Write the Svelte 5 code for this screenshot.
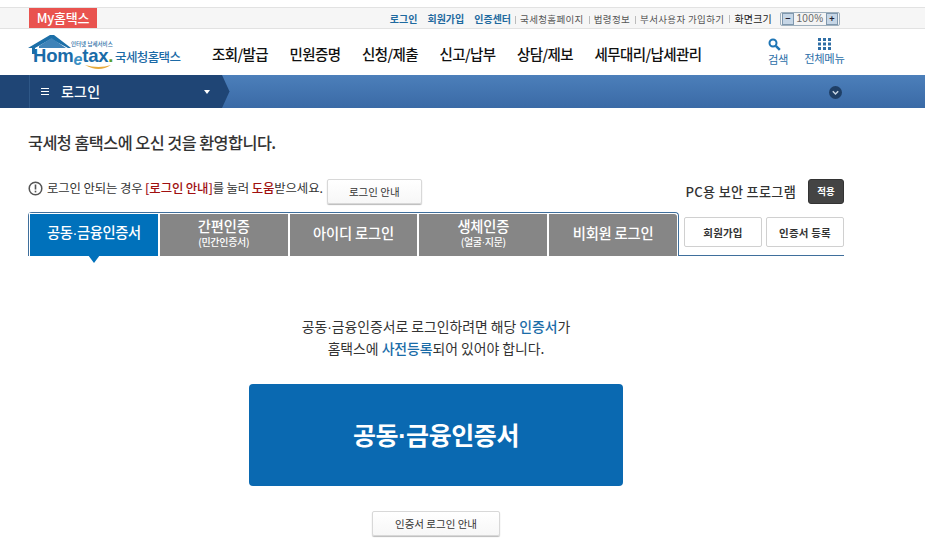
<script>
  const tabs = [
    { a: '공동', b: '금융인증서', active: true },
    { t: '간편인증', s: '(민간인증서)' },
    { t: '아이디 로그인' },
    { t: '생체인증', sa: '(얼굴', sb: '지문)' },
    { t: '비회원 로그인' }
  ];
  const menu = ['조회/발급', '민원증명', '신청/제출', '신고/납부', '상담/제보', '세무대리/납세관리'];
</script>

<div class="page">
  <div class="util">
    <div class="my">My홈택스</div>
    <div class="links">
      <b>로그인</b><b>회원가입</b><b>인증센터</b>
      <span class="sep first">국세청홈페이지</span>
      <span class="sep">법령정보</span>
      <span class="sep">부서사용자 가입하기</span>
      <span class="sep dark">화면크기</span>
      <div class="zoomer"><i>−</i><em>100%</em><i>+</i></div>
    </div>
  </div>

  <header class="head">
    <div class="logo">
      <svg width="90" height="44" viewBox="0 0 90 44" class="house">
        <path d="M1 15 L23 2 L27 2 L44 15 L41 15 L24 6 L8 15 L8 21 L5 21 L5 15 Z" fill="#1c6fa8"/>
        <path d="M12 13 L24.500 5 L39 15 L12 15 Z" fill="#3f83b8"/>
        <path d="M58 32 Q72 40 84 32 Q72 36 58 32 Z" fill="#e6a93c"/>
      </svg>
      <span class="mini">인터넷 납세서비스</span>
      <span class="home">Hom<span class="e">e</span>tax<span class="dot">.</span></span>
      <span class="kr">국세청홈택스</span>
    </div>
    <nav class="nav">
      {#each menu as m}<span>{m}</span>{/each}
    </nav>
    <div class="tools">
      <div class="tool s">
        <svg class="lens" width="13" height="13" viewBox="0 0 13 13"><circle cx="5" cy="5" r="3.500" fill="none" stroke="#1e75b5" stroke-width="2"/><path d="M7.800 7.800 L11.800 11.800" stroke="#1e75b5" stroke-width="2.500"/></svg>
        <span>검색</span>
      </div>
      <div class="tool a">
        <svg width="13" height="12" viewBox="0 0 13 12" fill="#2f6ea5">
          <rect x="0" y="0" width="3" height="3"/><rect x="5" y="0" width="3" height="3"/><rect x="10" y="0" width="3" height="3"/>
          <rect x="0" y="4.500" width="3" height="3"/><rect x="5" y="4.500" width="3" height="3"/><rect x="10" y="4.500" width="3" height="3"/>
          <rect x="0" y="9" width="3" height="3"/><rect x="5" y="9" width="3" height="3"/><rect x="10" y="9" width="3" height="3"/>
        </svg>
        <span>전체메뉴</span>
      </div>
    </div>
  </header>

  <div class="crumb">
    <div class="crumb-left">
      <span class="burger"><i></i><i></i><i></i></span>
      <span class="crumb-title">로그인</span>
      <span class="caret"></span>
    </div>
    <svg class="arrow" width="9" height="33" viewBox="0 0 9 33"><path d="M0 0 L7.500 16.500 L0 33 Z" fill="#1f4575"/></svg>
    <div class="down">
      <svg width="13" height="13" viewBox="0 0 13 13"><circle cx="6.500" cy="6.500" r="6.500" fill="#1f3f66"/><path d="M3.800 5.300 L6.500 8 L9.200 5.300" fill="none" stroke="#c9d6e4" stroke-width="1.500"/></svg>
    </div>
  </div>

  <main class="main">
    <h1>국세청 홈택스에 오신 것을 환영합니다.</h1>

    <div class="notice">
      <div class="notice-left">
        <svg class="raised" width="15" height="15" viewBox="0 0 15 15"><circle cx="7.500" cy="7.500" r="6.300" fill="none" stroke="#555" stroke-width="1.500"/><rect x="6.700" y="3.500" width="1.600" height="5" fill="#555"/><rect x="6.700" y="9.700" width="1.600" height="1.700" fill="#555"/></svg>
        <span class="msg raised">로그인 안되는 경우 <em>[로그인 안내]</em>를 눌러 <em>도움</em>받으세요.</span>
        <button class="btn guide">로그인 안내</button>
      </div>
      <div class="notice-right">
        <span>PC용 보안 프로그램</span>
        <button class="apply">적용</button>
      </div>
    </div>

    <div class="tabbar">
      <div class="tabs">
        {#each tabs as tab}
          <div class="tab" class:active={tab.active}>
            {#if tab.a}
              <span class="tt">{tab.a}<span class="mid">·</span>{tab.b}</span>
            {:else}
              <span class="tt">{tab.t}</span>
            {/if}
            {#if tab.s}<span class="ts">{tab.s}</span>{/if}
            {#if tab.sa}<span class="ts">{tab.sa}<span class="mid">·</span>{tab.sb}</span>{/if}
          </div>
        {/each}
      </div>
      <div class="side">
        <button class="sbtn">회원가입</button>
        <button class="sbtn">인증서 등록</button>
      </div>
    </div>

    <div class="pointer"></div>

    <div class="panel">
      <p class="desc">공동<span class="mid">·</span>금융인증서로 로그인하려면 해당 <b>인증서</b>가<br />홈택스에 <b>사전등록</b>되어 있어야 합니다.</p>
      <button class="cert">공동<span class="mid">·</span>금융인증서</button>
      <button class="btn certguide">인증서 로그인 안내</button>
    </div>
  </main>
</div>

<style>
  :global(body) { margin: 0; background: #fff; }
  .page {
    width: 925px; height: 541px; overflow: hidden; padding-top: 7px; box-sizing: border-box;
    font-family: "Noto Sans CJK KR", "Noto Sans", sans-serif; color: #222;
  }
  button { font-family: inherit; cursor: pointer; padding: 0; }
  .mid { font-family: "Liberation Sans", sans-serif; }

  .util {
    height: 20px; background: #f6f6f6; border-top: 1px solid #e2e2e2; border-bottom: 1px solid #e2e2e2;
    display: flex; justify-content: space-between; padding-left: 29px;
  }
  .my {
    width: 68px; height: 20px; background: #e9534f; color: #fff; font-size: 13px; font-weight: 500;
    text-align: center; line-height: 20px; letter-spacing: -0.2px;
  }
  .links {
    display: flex; align-items: center; font-size: 9.500px; color: #555; padding: 1px 85px 0 0; white-space: nowrap;
  }
  .links b { color: #1f6a9f; margin-right: 10px; font-weight: 700; font-size: 10px; }
  .links b:nth-child(3) { margin-right: 0; }
  .sep { position: relative; padding-left: 5px; margin-left: 5px; letter-spacing: 0.35px; }
  .sep::before {
    content: ""; position: absolute; left: 0; top: 4px; height: 8px; width: 1px; background: #bbb;
  }
  .sep.first { margin-left: 4px; }
  .sep.dark { color: #222; font-size: 10px; letter-spacing: 0.2px; }
  .zoomer {
    margin-left: 8px; height: 14px; width: 60px; box-sizing: border-box; border: 1px solid #9fb0bd; border-radius: 2px;
    display: flex; align-items: center; justify-content: space-between; padding: 0 1px; background: #f4f4f4;
  }
  .zoomer i {
    width: 10px; height: 10px; background: #c6d6e6; border: 1px solid #7f97ad; font-style: normal; font-size: 9px;
    line-height: 9px; text-align: center; color: #223; font-weight: 700;
  }
  .zoomer em { font-style: normal; font-family: "Liberation Sans", sans-serif; font-size: 10px; color: #666; letter-spacing: 0.4px; }

  .head { height: 46px; display: flex; position: relative; }
  .logo { width: 212px; flex: none; position: relative; }
  .house { position: absolute; left: 27px; top: 4px; }
  .mini { position: absolute; left: 71px; top: 12px; font-size: 5.500px; line-height: 6px; color: #2a6da5; white-space: nowrap; font-weight: 500; }
  .home {
    position: absolute; left: 33px; top: 19px; font-family: "Liberation Sans", sans-serif; font-weight: 700;
    font-size: 18.500px; line-height: 16px; color: #1a6ca8; letter-spacing: -0.2px; white-space: nowrap;
  }
  .e { color: #3c8fc4; font-size: 16px; position: relative; top: 3px; font-style: italic; }
  .dot { color: #5aa02c; }
  .kr { position: absolute; left: 115px; top: 19px; font-size: 12.500px; line-height: 18px; font-weight: 500; color: #1c6aa6; letter-spacing: -0.6px; white-space: nowrap; }
  .nav { display: flex; gap: 21.500px; font-size: 14.500px; color: #111; align-items: center; padding-top: 3px; letter-spacing: -0.6px; white-space: nowrap; font-weight: 500; }
  .tools { position: absolute; left: 768px; top: 9px; display: flex; gap: 16px; }
  .tool { display: flex; flex-direction: column; align-items: center; gap: 1px; color: #2a6ea8; font-size: 11.300px; line-height: 14px; letter-spacing: -0.3px; }
  .lens { align-self: flex-start; }

  .crumb {
    height: 33px; display: flex; padding-left: 29px; align-items: stretch; position: relative;
    background: linear-gradient(#4c7fba, #3a6aa6);
  }
  .crumb::before { content: ""; position: absolute; left: 0; top: 0; bottom: 0; width: 29px; background: #1f4575; }
  .crumb-left {
    width: 193px; background: #1f4575; display: flex; align-items: center; color: #fff; position: relative;
    border-left: 1px solid #2e5787; box-sizing: border-box; padding-bottom: 2px;
  }
  .burger { display: flex; flex-direction: column; gap: 2px; margin-left: 11px; width: 8px; padding-top: 1px; }
  .burger i { display: block; height: 1px; background: #fff; }
  .crumb-title { margin-left: 12px; font-size: 14px; font-weight: 500; letter-spacing: 0.2px; }
  .caret {
    position: absolute; left: 174px; top: 15px; border-left: 3.500px solid transparent; border-right: 3.500px solid transparent; border-top: 4px solid #fff;
  }
  .arrow { flex: none; }
  .down { position: absolute; left: 829px; top: 11px; height: 13px; line-height: 0; }

  .main { width: 816px; margin-left: 28px; position: relative; }
  h1 { margin: 0; padding-top: 22px; font-size: 16.300px; line-height: 24px; font-weight: 500; color: #333; letter-spacing: -0.55px; }
  .notice { margin-top: 24px; display: flex; justify-content: space-between; align-items: center; height: 26px; }
  .notice-left { display: flex; align-items: center; }
  .raised { margin-bottom: 6px; }
  .msg { margin-left: 4px; font-size: 12.400px; color: #333; letter-spacing: -0.13px; white-space: nowrap; }
  .msg em { color: #a01010; font-style: normal; font-weight: 500; }
  .btn {
    background: linear-gradient(#fff, #f7f7f7); border: 1px solid #d8d8d8; border-radius: 2px; box-shadow: 0 1px 1px #bbb;
    font-size: 10.500px; color: #333; letter-spacing: 0;
  }
  .guide { width: 95px; height: 25px; margin-left: 4px; }
  .notice-right { display: flex; align-items: center; gap: 12px; }
  .notice-right span { font-size: 13.100px; font-weight: 500; color: #333; letter-spacing: 0.3px; }
  .apply {
    width: 36px; height: 25px; background: #444; color: #fff; border: 1px solid #333; border-radius: 3px;
    font-size: 9.500px; font-weight: 700;
  }

  .tabbar { margin-top: 8px; height: 44px; display: flex; }
  .tabs {
    display: flex; border: 1px solid #3f6f9c; border-bottom: 0; border-radius: 4px 4px 0 0; height: 44px; box-sizing: border-box; flex: none;
    width: 651px;
  }
  .tab {
    flex: 1; background: #868686; color: #fff; display: flex; flex-direction: column; align-items: center; justify-content: center;
    border-left: 1px solid #fff; border-right: 1px solid #fff; box-sizing: border-box; border-top: 1px solid #fff; padding-bottom: 5px;
  }
  .tab.active { background: #0071bb; }
  .tab.active .tt { letter-spacing: -0.4px; }
  .tab:last-child { border-radius: 0 4px 0 0; }
  .tt { font-size: 14.300px; font-weight: 500; line-height: 18px; letter-spacing: -0.2px; white-space: nowrap; }
  .ts { font-size: 10px; font-weight: 500; line-height: 12px; letter-spacing: -0.3px; white-space: nowrap; margin-top: 1px; }
  .side {
    flex: 1; display: flex; gap: 4px; align-items: flex-start; padding: 5px 0 0 5px; border-bottom: 1px solid #3f6f9c; box-sizing: border-box;
  }
  .sbtn {
    width: 78px; height: 30px; background: #fff; border: 1px solid #d0d0d0; border-radius: 2px; font-size: 10.500px; font-weight: 700; color: #333; letter-spacing: 0.2px;
  }

  .pointer {
    position: absolute; left: 60px; top: 147px; width: 0; height: 0;
    border-left: 6px solid transparent; border-right: 6px solid transparent; border-top: 8px solid #0071bb;
  }

  .panel { display: flex; flex-direction: column; align-items: center; padding-top: 60px; }
  .desc { margin: 0; text-align: center; font-size: 13.900px; line-height: 21px; color: #333; letter-spacing: -0.05px; white-space: nowrap; }
  .desc b { color: #1a6ca8; font-weight: 500; }
  .cert {
    margin-top: 25px; width: 374px; height: 102px; background: #0a69b1; border: 0; border-radius: 4px; color: #fff;
    font-size: 25px; font-weight: 700; letter-spacing: -0.4px; padding-bottom: 3px;
  }
  .certguide { margin-top: 25px; width: 128px; height: 25px; }
</style>
